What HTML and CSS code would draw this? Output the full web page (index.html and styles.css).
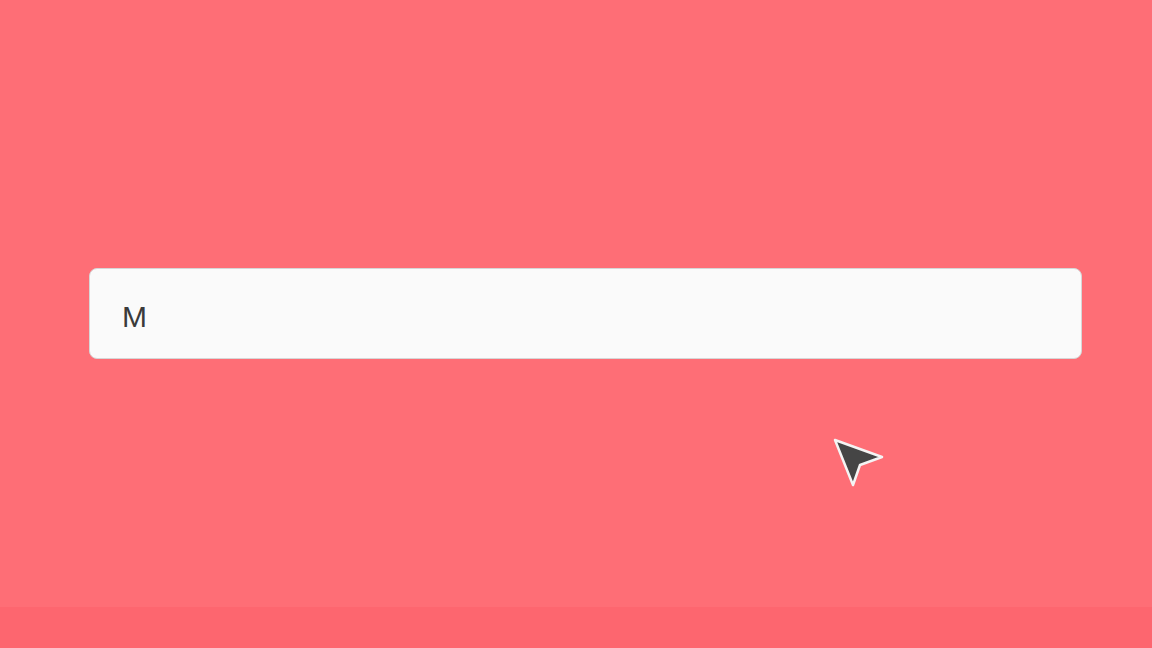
FILE: index.html
```html
<!DOCTYPE html>
<html>
<head>
<meta charset="utf-8">
<link rel="stylesheet" href="styles.css">
</head>
<body>
<div class="page">
  <main class="stage">
    <div class="field"><span class="field-text">M</span></div>
  </main>
  <footer class="band"></footer>
  <svg class="cursor" width="60" height="60" viewBox="0 0 60 60">
    <path d="M5 6 L52 23 L30 31 L23 51 Z" fill="#454545" stroke="#f4f4f4" stroke-width="2.5" stroke-linejoin="round"/>
  </svg>
</div>
</body>
</html>
```
FILE: styles.css
```css
html, body {
  margin: 0;
  padding: 0;
}
body {
  width: 1152px;
  height: 648px;
  overflow: hidden;
  font-family: "Liberation Sans", Arial, sans-serif;
  background: #fe6e76;
}
.page {
  position: relative;
  display: flex;
  flex-direction: column;
  height: 648px;
}
.stage {
  flex: 1;
  padding: 268px 70px 0 89px;
  background: #fe6e76;
}
.field {
  box-sizing: border-box;
  height: 91px;
  background: #fafafa;
  border: 1px solid #d6d6d6;
  border-radius: 8px;
  display: flex;
  align-items: center;
  padding-left: 32px;
}
.field-text {
  font-size: 30px;
  color: #3a3a3a;
  margin-top: 6px;
}
.band {
  height: 41px;
  background: #fd666f;
}
.cursor {
  position: absolute;
  left: 830px;
  top: 434px;
}
```
